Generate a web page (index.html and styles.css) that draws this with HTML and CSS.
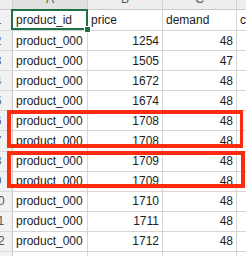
FILE: index.html
```html
<!DOCTYPE html>
<html>
<head>
<meta charset="utf-8">
<link rel="stylesheet" href="styles.css">
</head>
<body>
<div class="sheet">
  <div class="grid">
    <div class="corner"></div>
    <div class="colhead sel">A</div>
    <div class="colhead">B</div>
    <div class="colhead">C</div>
    <div class="colhead">D</div>

    <div class="rowhead first">1</div>
    <div class="cell active">product_id<span class="handle"></span></div>
    <div class="cell">price</div>
    <div class="cell">demand</div>
    <div class="cell">cost</div>

    <div class="rowhead">2</div><div class="cell">product_000</div><div class="cell num">1254</div><div class="cell num">48</div><div class="cell"></div>
    <div class="rowhead">3</div><div class="cell">product_000</div><div class="cell num">1505</div><div class="cell num">47</div><div class="cell"></div>
    <div class="rowhead">4</div><div class="cell">product_000</div><div class="cell num">1672</div><div class="cell num">48</div><div class="cell"></div>
    <div class="rowhead">5</div><div class="cell">product_000</div><div class="cell num">1674</div><div class="cell num">48</div><div class="cell"></div>
    <div class="rowhead">6</div><div class="cell">product_000</div><div class="cell num">1708</div><div class="cell num">48</div><div class="cell"></div>
    <div class="rowhead">7</div><div class="cell">product_000</div><div class="cell num">1708</div><div class="cell num">48</div><div class="cell"></div>
    <div class="rowhead">8</div><div class="cell">product_000</div><div class="cell num">1709</div><div class="cell num">48</div><div class="cell"></div>
    <div class="rowhead">9</div><div class="cell">product_000</div><div class="cell num">1709</div><div class="cell num">48</div><div class="cell"></div>
    <div class="rowhead">10</div><div class="cell">product_000</div><div class="cell num">1710</div><div class="cell num">48</div><div class="cell"></div>
    <div class="rowhead">11</div><div class="cell">product_000</div><div class="cell num">1711</div><div class="cell num">48</div><div class="cell"></div>
    <div class="rowhead">12</div><div class="cell">product_000</div><div class="cell num">1712</div><div class="cell num">48</div><div class="cell"></div>
    <div class="rowhead">13</div><div class="cell">product_000</div><div class="cell num">1713</div><div class="cell num">48</div><div class="cell"></div>
  </div>
  <div class="mark mark1"></div>
  <div class="mark mark2"></div>
</div>
</body>
</html>
```
FILE: styles.css
```css
html, body {
  margin: 0;
  padding: 0;
  background: #ffffff;
  overflow: hidden;
}

.sheet {
  position: relative;
  width: 246px;
  height: 256px;
  overflow: hidden;
  font-family: "Liberation Sans", Arial, sans-serif;
  font-size: 12px;
  color: #1c1c1c;
}

.grid {
  display: grid;
  grid-template-columns: 29px 75px 75px 74px 75px;
  grid-template-rows: 21px 21px;
  grid-auto-rows: 20.1px;
  margin-top: -11px;
  margin-left: -16px;
}

.corner,
.colhead {
  background: #eeeeee;
  border-right: 1px solid #d2d2d2;
  border-bottom: 1px solid #c8c8c8;
}

.colhead {
  display: flex;
  align-items: center;
  justify-content: center;
  color: #555555;
}

.colhead.sel {
  background: #e1e1e1;
  color: #1e7145;
}

.rowhead {
  display: flex;
  align-items: center;
  justify-content: center;
  background: #f1f1f1;
  border-right: 1px solid #c8c8c8;
  border-bottom: 1px solid #d8d8d8;
  color: #555555;
  font-size: 12px;
}

.cell {
  display: flex;
  align-items: center;
  padding: 0 3px;
  border-right: 1px solid #d6d6d6;
  border-bottom: 1px solid #d6d6d6;
  white-space: nowrap;
  overflow: hidden;
  min-width: 0;
}

.cell.num {
  justify-content: flex-end;
}

.cell.active {
  position: relative;
  overflow: visible;
  z-index: 2;
}

.cell.active::after {
  content: "";
  position: absolute;
  left: -2px;
  top: -1px;
  right: -1px;
  bottom: 0;
  border: 2px solid #1e7145;
  pointer-events: none;
}

.handle {
  position: absolute;
  left: 71px;
  top: 16px;
  width: 5px;
  height: 5px;
  background: #1e7145;
  border: 1px solid #ffffff;
  z-index: 3;
}

.mark {
  position: absolute;
  border: 4px solid #fc2b0e;
  box-sizing: border-box;
}

.mark1 {
  left: 7px;
  top: 110px;
  width: 236px;
  height: 38px;
  border-right-width: 3px;
}

.mark2 {
  left: 7px;
  top: 151px;
  width: 238px;
  height: 37px;
}
```
